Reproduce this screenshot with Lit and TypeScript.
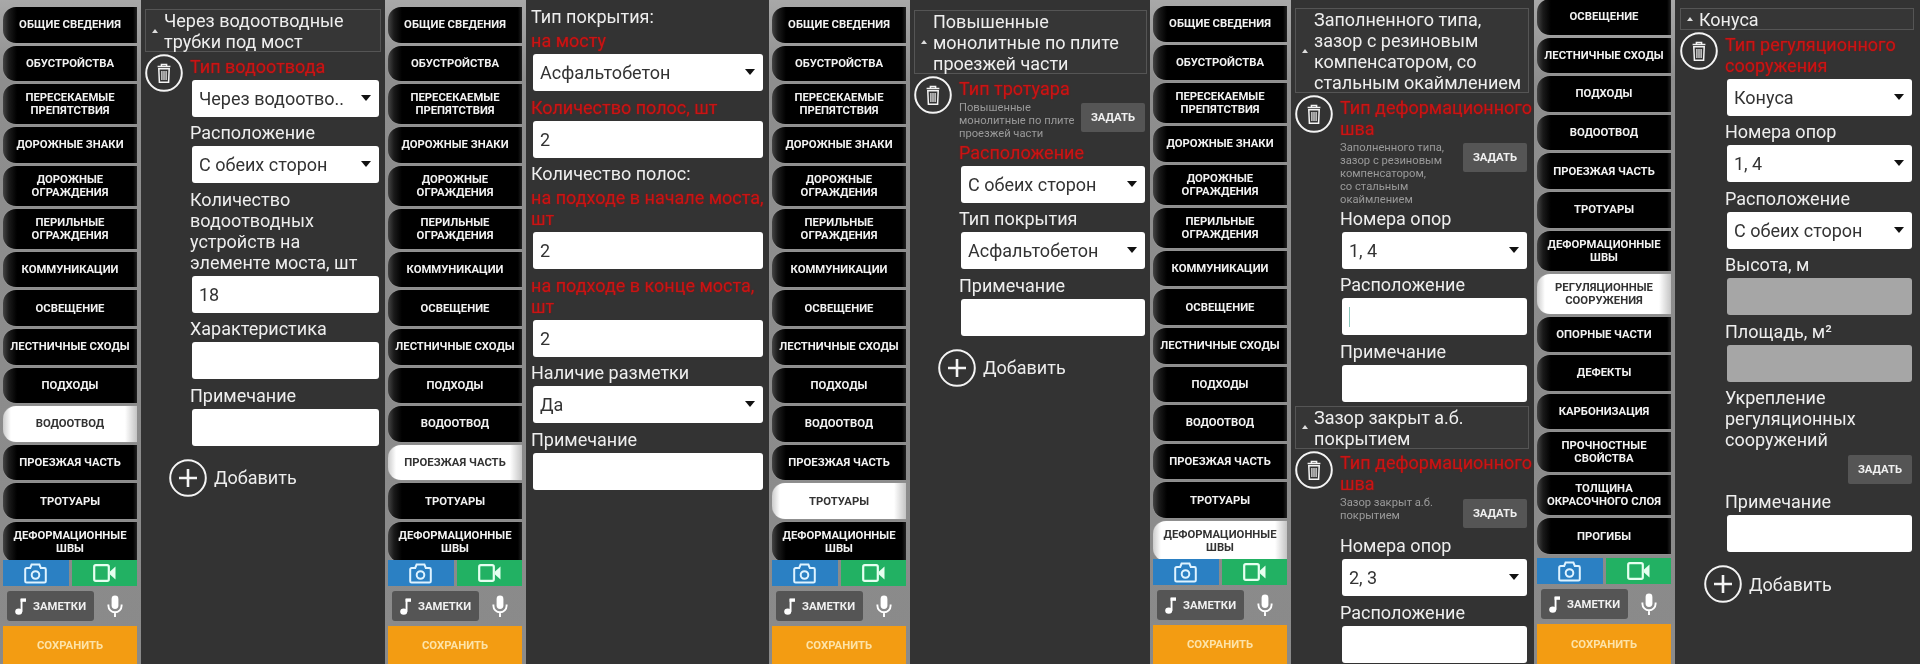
import { LitElement, html, css, svg } from "lit";
import { customElement } from "lit/decorators.js";

const ALL = ["ОБЩИЕ СВЕДЕНИЯ","ОБУСТРОЙСТВА","ПЕРЕСЕКАЕМЫЕ\nПРЕПЯТСТВИЯ","ДОРОЖНЫЕ ЗНАКИ","ДОРОЖНЫЕ\nОГРАЖДЕНИЯ","ПЕРИЛЬНЫЕ\nОГРАЖДЕНИЯ","КОММУНИКАЦИИ","ОСВЕЩЕНИЕ","ЛЕСТНИЧНЫЕ СХОДЫ","ПОДХОДЫ","ВОДООТВОД","ПРОЕЗЖАЯ ЧАСТЬ","ТРОТУАРЫ","ДЕФОРМАЦИОННЫЕ\nШВЫ","РЕГУЛЯЦИОННЫЕ\nСООРУЖЕНИЯ","ОПОРНЫЕ ЧАСТИ","ДЕФЕКТЫ","КАРБОНИЗАЦИЯ","ПРОЧНОСТНЫЕ\nСВОЙСТВА","ТОЛЩИНА\nОКРАСОЧНОГО СЛОЯ","ПРОГИБЫ"];

type Block =
  | { t: "h"; text: string }
  | { t: "l"; text: string; red?: boolean }
  | { t: "s"; text: string }
  | { t: "i"; text?: string; off?: boolean; caret?: boolean }
  | { t: "n"; text?: string }
  | { t: "add" }
  | { t: "e"; items: Block[] };

interface Phone { active: string; first: number; scrollY: number; footer: number; pad: [number, number]; top: number; content: Block[]; }

const h = (text: string): Block => ({ t: "h", text });
const l = (text: string): Block => ({ t: "l", text });
const r = (text: string): Block => ({ t: "l", text, red: true });
const s = (text: string): Block => ({ t: "s", text });
const i = (text = "", extra: Partial<{ off: boolean; caret: boolean }> = {}): Block => ({ t: "i", text, ...extra });
const n = (text = ""): Block => ({ t: "n", text });
const e = (...items: Block[]): Block => ({ t: "e", items });
const add: Block = { t: "add" };

const PHONES: Phone[] = [
  { active: "ВОДООТВОД", first: 0, scrollY: 7, footer: 104, pad: [4, 6], top: 9, content: [
    h("Через водоотводные трубки под мост"),
    e(r("Тип водоотвода"), s("Через водоотво.."), l("Расположение"), s("С обеих сторон"), l("Количество водоотводных устройств на элементе моста, шт"), i("18"), l("Характеристика"), i(), l("Примечание"), i()),
    add ] },
  { active: "ПРОЕЗЖАЯ ЧАСТЬ", first: 0, scrollY: 7, footer: 104, pad: [5, 6], top: 6, content: [
    l("Тип покрытия:"), r("на мосту"), s("Асфальтобетон"), r("Количество полос, шт"), i("2"),
    l("Количество полос:"), r("на подходе в начале моста, шт"), i("2"), r("на подходе в конце моста, шт"), i("2"),
    l("Наличие разметки"), s("Да"), l("Примечание"), i() ] },
  { active: "ТРОТУАРЫ", first: 0, scrollY: 7, footer: 104, pad: [4, 5], top: 10, content: [
    h("Повышенные монолитные по плите проезжей части"),
    e(r("Тип тротуара"), n("Повышенные\nмонолитные по плите\nпроезжей части"), r("Расположение"), s("С обеих сторон"), l("Тип покрытия"), s("Асфальтобетон"), l("Примечание"), i()),
    add ] },
  { active: "ДЕФОРМАЦИОННЫЕ\nШВЫ", first: 0, scrollY: 6, footer: 105, pad: [4, 7], top: 8, content: [
    h("Заполненного типа, зазор с резиновым компенсатором, со стальным окаймлением"),
    e(r("Тип деформационного шва"), n("Заполненного типа,\nзазор с резиновым\nкомпенсатором,\nсо стальным\nокаймлением"), l("Номера опор"), s("1, 4"), l("Расположение"), i("", { caret: true }), l("Примечание"), i()),
    h("Зазор закрыт а.б. покрытием"),
    e(r("Тип деформационного шва"), n("Зазор закрыт а.б.\nпокрытием"), l("Номера опор"), s("2, 3"), l("Расположение"), i()) ] },
  { active: "РЕГУЛЯЦИОННЫЕ\nСООРУЖЕНИЯ", first: 7, scrollY: -1, footer: 106, pad: [5, 8], top: 8, content: [
    h("Конуса"),
    e(r("Тип регуляционного сооружения"), s("Конуса"), l("Номера опор"), s("1, 4"), l("Расположение"), s("С обеих сторон"), l("Высота, м"), i("", { off: true }), l("Площадь, м²"), i("", { off: true }), l("Укрепление регуляционных сооружений"), n(), l("Примечание"), i()),
    add ] },
];

const trash = svg`<svg class="trash" viewBox="0 0 38 38" fill="none" stroke="#f4f4f4"><circle cx="19" cy="19" r="17.8" stroke-width="2"/><path d="M12.6 12.6h12.8M16.4 12.4v-1.8h5.2v1.8" stroke-width="1.5"/><path d="M13.8 14.8h10.4l-.6 13.4h-9.2z" stroke-width="1.5"/><path d="M16.9 17v9M19 17v9M21.1 17v9" stroke-width="1.2"/></svg>`;
const plus = svg`<svg class="plus" viewBox="0 0 38 38" fill="none" stroke="#f4f4f4"><circle cx="19" cy="19" r="17.8" stroke-width="2"/><path d="M19 10v18M10 19h18" stroke-width="2.6"/></svg>`;
const camera = svg`<svg width="23" height="21" viewBox="0 0 23 21" fill="none" stroke="#dff3ff" stroke-width="2"><path d="M2.6 5h3.6l1.4-3.4h7.8L16.8 5h3.6a1.4 1.4 0 0 1 1.4 1.4v11.8a1.4 1.4 0 0 1-1.4 1.4H2.6a1.4 1.4 0 0 1-1.4-1.4V6.4A1.4 1.4 0 0 1 2.6 5z"/><circle cx="11.5" cy="12" r="3.8"/></svg>`;
const video = svg`<svg width="23" height="18" viewBox="0 0 23 18" fill="none"><rect x="1.2" y="1.2" width="14.6" height="15.6" rx="1.6" stroke="#e6fff0" stroke-width="2.2"/><path d="M17 7.5L22.5 2.5v13L17 10.5z" fill="#e6fff0"/></svg>`;
const note = svg`<svg width="11" height="17" viewBox="0 0 11 17" fill="#fff"><ellipse cx="3.7" cy="13.6" rx="3.5" ry="3.2"/><path d="M5.6 1h1.9v12.6H5.6z"/><path d="M5.6 0.4H11v3.4H5.6z"/></svg>`;
const mic = svg`<svg width="16" height="23" viewBox="0 0 16 23" fill="none" stroke="#fff"><rect x="4.6" y="0.5" width="6.8" height="13.5" rx="3.4" fill="#fff" stroke="none"/><path d="M1.4 9.5v1.2a6.6 6.6 0 0 0 13.2 0V9.5M8 17.4V22" stroke-width="1.9"/></svg>`;

@customElement("app-root")
export class AppRoot extends LitElement {
  static styles = css`
    :host { display: block; width: 1920px; height: 664px; overflow: hidden; background: #333; font-family: Roboto, "Noto Sans", sans-serif; }
    .page { display: grid; grid-template-columns: 385px 384px 381px 384px 386px; height: 664px; filter: blur(0.45px); }
    .phone { display: flex; height: 664px; overflow: hidden; background: #333; }
    .side { width: 141px; flex: none; box-sizing: border-box; padding: 0 4px 0 3px; display: flex; flex-direction: column; background: linear-gradient(180deg, #a8a8a8, #8e8e8e 12%, #8a8a8a); }
    .menu { flex: 1; min-height: 0; overflow: hidden; display: flex; flex-direction: column; gap: 3px; }
    .item { flex: none; min-height: 35.6px; box-sizing: border-box; padding: 7px 2px; display: flex; align-items: center; justify-content: center; text-align: center; white-space: pre-line; color: #f2f2f2; font-weight: 700; font-size: 11.3px; line-height: 13px; border-radius: 13px 0 0 13px; background: linear-gradient(90deg, #444, #1a1a1a 6px, #000 14px, #000 calc(100% - 4px), #222); box-shadow: 0 0 1px #bbb; }
    .item.on { color: #333; background: linear-gradient(90deg, #ccc, #fff 8px, #fff calc(100% - 12px), #c4c4c4); }
    .foot { flex: none; display: flex; flex-direction: column; }
    .media { display: flex; gap: 3px; height: 26px; }
    .media div { flex: 1; display: flex; align-items: center; justify-content: center; }
    .blue { background: #2b80c3; }
    .green { background: #22b163; }
    .notes { display: flex; align-items: center; height: 30px; margin-top: 5px; padding-left: 4px; }
    .nbtn { width: 87px; height: 30px; display: flex; align-items: center; justify-content: center; gap: 7px; background: #555; border-radius: 3px; color: #f0f0f0; font-size: 11.3px; font-weight: 700; }
    .mic { flex: 1; display: flex; justify-content: center; padding-right: 2px; }
    .save { flex: 1; margin-top: 5px; display: flex; align-items: center; justify-content: center; background: #f39c12; color: #fde3a8; font-size: 11.3px; font-weight: 700; }
    .body { flex: 1; min-width: 0; box-sizing: border-box; color: #eee; font-size: 18px; line-height: 21px; }
    .hdr { display: flex; align-items: center; box-sizing: border-box; margin-right: -2px; border: 1px solid #555; background: #363636; }
    .hdr i { flex: none; width: 0; height: 0; margin: 0 6px 0 6px; border: 3.5px solid transparent; border-top: 0; border-bottom: 4px solid #ddd; }
    .hdr span { margin-bottom: -1px; }
    .entry { display: flex; gap: 7px; margin-top: 2px; }
    .entry + .hdr { margin-top: -1.5px; }
    .trash { flex: none; width: 38px; height: 38px; display: block; }
    .fields { flex: 1; min-width: 0; padding-top: 1.5px; }
    .lab { margin: 0 -5px 3px 0; }
    .lab.red { color: #c91414; text-shadow: 0 0 1.5px #a01010; }
    .ctl { position: relative; height: 37px; margin: 0 0 5.5px 2px; box-sizing: border-box; padding: 0 7px; display: flex; align-items: center; background: #fff; border-radius: 3px; color: #333; }
    .ctl.off { background: #a6a6a6; }
    .arrow { position: absolute; right: 8px; top: 15px; width: 0; height: 0; border: 5.5px solid transparent; border-bottom: 0; border-top: 6px solid #111; }
    .caret { width: 1px; height: 20px; background: #8cc8bc; }
    .nrow { display: flex; justify-content: space-between; align-items: flex-start; margin: -1px 0 2px; }
    .ntxt { color: #9a9a9a; font-size: 11.2px; line-height: 13px; white-space: pre-line; }
    .btn { width: 64px; height: 29px; margin-top: 2.5px; margin-bottom: 5.5px; display: flex; align-items: center; justify-content: center; background: #555; border-radius: 2px; color: #f0f0f0; font-size: 11.3px; font-weight: 700; }
    .add { display: flex; align-items: center; gap: 7px; margin: 7.5px 0 0 24px; }
    .plus { width: 38px; height: 38px; display: block; }
  `;

  private block(b: Block): unknown {
    switch (b.t) {
      case "h": return html`<div class="hdr"><i></i><span>${b.text}</span></div>`;
      case "l": return html`<div class="lab ${b.red ? "red" : ""}">${b.text}</div>`;
      case "s": return html`<div class="ctl">${b.text}<span class="arrow"></span></div>`;
      case "i": return html`<div class="ctl ${b.off ? "off" : ""}">${b.text}${b.caret ? html`<span class="caret"></span>` : ""}</div>`;
      case "n": return html`<div class="nrow"><div class="ntxt">${b.text}</div><div class="btn">ЗАДАТЬ</div></div>`;
      case "add": return html`<div class="add">${plus}<span>Добавить</span></div>`;
      case "e": return html`<div class="entry">${trash}<div class="fields">${b.items.map((x) => this.block(x))}</div></div>`;
    }
  }

  render() {
    return html`<div class="page">${PHONES.map((p) => html`
      <section class="phone">
        <div class="side">
          <div class="menu" style="padding-top:${Math.max(p.scrollY, 0)}px;margin-top:${Math.min(p.scrollY, 0)}px">
            ${ALL.slice(p.first, p.first + 14).map((m) => html`<div class="item ${m === p.active ? "on" : ""}">${m}</div>`)}
          </div>
          <div class="foot" style="height:${p.footer}px">
            <div class="media"><div class="blue">${camera}</div><div class="green">${video}</div></div>
            <div class="notes"><div class="nbtn">${note}<span>ЗАМЕТКИ</span></div><div class="mic">${mic}</div></div>
            <div class="save">СОХРАНИТЬ</div>
          </div>
        </div>
        <div class="body" style="padding:${p.top}px ${p.pad[1]}px 0 ${p.pad[0]}px">${p.content.map((b) => this.block(b))}</div>
      </section>`)}</div>`;
  }
}
